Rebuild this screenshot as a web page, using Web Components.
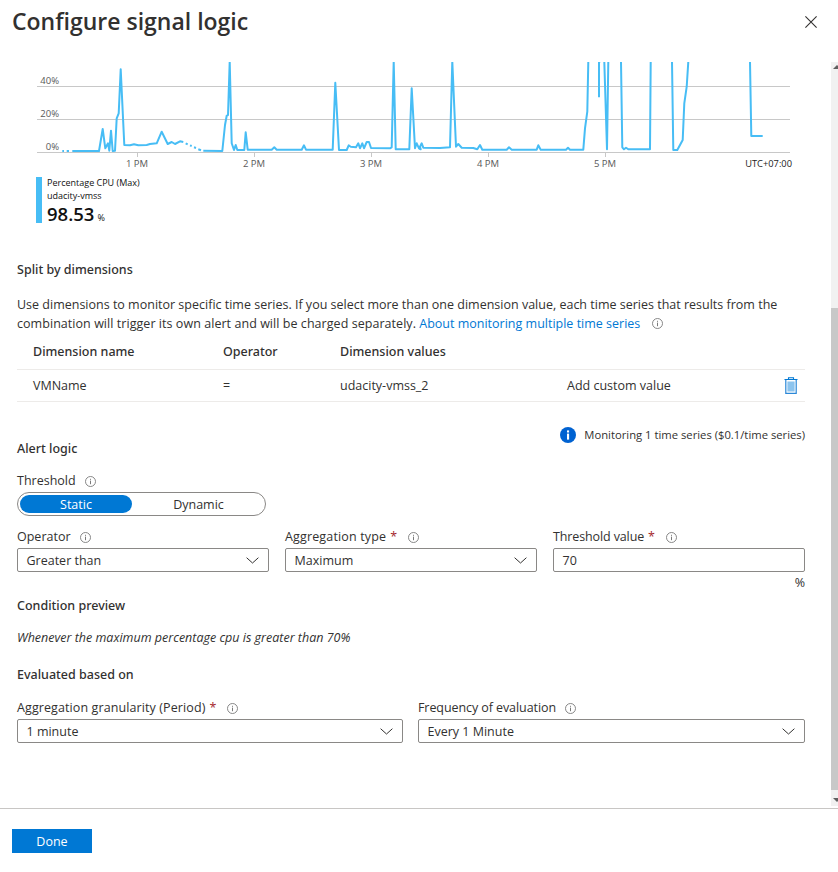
<!DOCTYPE html>
<html><head><meta charset="utf-8"><title>Configure signal logic</title>
<style>
html,body{margin:0;padding:0;height:100%;background:#fff}
body{font:12.5px/18px "Open Sans","Noto Sans",sans-serif;color:#323130;overflow:hidden}
</style></head><body>
<sig-panel>
  <span slot="title">Configure signal logic</span>
  <sig-chart></sig-chart>
  <sig-heading style="margin-top:38px">Split by dimensions</sig-heading>
  <sig-text style="margin-top:16px">Use dimensions to monitor specific time series. If you select more than one dimension value, each time series that results from the <span style="letter-spacing:.05px">combination will trigger its own alert and will be charged separately.</span> <sig-link>About monitoring multiple time series</sig-link><sig-info style="margin-left:12px"></sig-info></sig-text>
  <sig-dim-table></sig-dim-table>
  <sig-alert-head style="margin-top:24px"></sig-alert-head>
  <sig-label style="margin-top:15px">Threshold</sig-label>
  <sig-toggle style="margin-top:2px"></sig-toggle>
  <sig-row columns="252px 252px 252px" style="margin-top:11px">
    <sig-field label="Operator" value="Greater than"></sig-field>
    <sig-field required label="Aggregation type" value="Maximum" track=".15px"></sig-field>
    <sig-field required label="Threshold value" value="70" plain track="-.12px"></sig-field>
  </sig-row>
  <sig-text style="margin-top:4px;text-align:right;height:13px;line-height:14px">%</sig-text>
  <sig-heading style="margin-top:7px;padding-top:1px">Condition preview</sig-heading>
  <sig-text style="margin-top:14px;font-style:italic">Whenever the maximum percentage cpu is greater than 70%</sig-text>
  <sig-heading style="margin-top:18px;padding-top:1px">Evaluated based on</sig-heading>
  <sig-row columns="386px 387px" style="margin-top:15px;gap:15px">
    <sig-field required label="Aggregation granularity (Period)" value="1 minute" track=".1px"></sig-field>
    <sig-field label="Frequency of evaluation" value="Every 1 Minute" track="-.08px"></sig-field>
  </sig-row>
  <sig-button slot="footer">Done</sig-button>
</sig-panel>
<script>
const def=(name,html,init)=>customElements.define(name,class extends HTMLElement{
  constructor(){super();this.attachShadow({mode:'open'}).innerHTML=html;}
  connectedCallback(){init&&init.call(this,this.shadowRoot);}
});
const MED='font-family:"Noto Sans","Open Sans",sans-serif;font-weight:500;';
const infoSvg=`<svg width="11" height="11" viewBox="0 0 11 11" style="display:block"><circle cx="5.5" cy="5.5" r="5" fill="none" stroke="#7a7a7a" stroke-width=".9"/><rect x="5" y="4.6" width="1" height="3.6" fill="#7a7a7a"/><rect x="5" y="2.8" width="1" height="1" fill="#7a7a7a"/></svg>`;
def('sig-info',`<style>:host{display:inline-block;vertical-align:-1px;width:11px;height:11px}</style>${infoSvg}`);
def('sig-panel',`<style>
:host{display:flex;flex-direction:column;height:872px;width:838px;position:relative;overflow:hidden}
header{height:62px;flex:none;display:flex;align-items:flex-start;justify-content:space-between;padding:0 21px 0 12px;box-sizing:border-box}
h1{margin:4px 0 0;font-size:23px;line-height:34px;font-weight:600;color:#323130}
.x{margin-top:16px;width:12px;height:12px;display:block}
main{flex:1;min-height:0;overflow:hidden;padding:0 33px 0 17px;display:flex;flex-direction:column;position:relative}
footer{flex:none;height:64px;border-top:1px solid #c8c6c4;padding:20px 12px 0;box-sizing:border-box}
.sb{position:absolute;right:0;top:62px;height:744px;width:7px;background:#f1f1f1}
.sb i{position:absolute;left:0;right:0;top:246px;bottom:16px;background:#c8c8c8}
.sb b{position:absolute;left:2px;width:0;height:0;border:4px solid transparent}
.sb .u{top:3px;border-bottom:4px solid #606060;border-top:0}
.sb .d{bottom:4px;border-top:4px solid #606060;border-bottom:0}
</style>
<header><h1><slot name="title"></slot></h1>
<svg class="x" viewBox="0 0 12 12"><path d="M.4.4l11.2 11.2M11.6.4L.4 11.6" stroke="#323130" stroke-width="1.1" fill="none"/></svg></header>
<main><slot></slot></main>
<footer><slot name="footer"></slot></footer>
<div class="sb"><b class="u"></b><i></i><b class="d"></b></div>`);
def('sig-heading',`<style>:host{display:block;box-sizing:border-box;${MED}font-size:12.5px;height:18px;color:#323130}</style><slot></slot>`);
def('sig-text',`<style>:host{display:block;line-height:19px}</style><slot></slot>`);
def('sig-link',`<style>:host{color:#0078d4}</style><slot></slot>`);
def('sig-button',`<style>:host{display:block;width:80px;height:24px;background:#0078d4;color:#fff;text-align:center;line-height:25px}</style><slot></slot>`);
def('sig-label',`<style>:host{display:flex;align-items:center;height:18px;gap:9px}</style><slot></slot>${infoSvg}`);
def('sig-row',`<style>:host{display:grid;gap:16px}</style><slot></slot>`,function(){this.style.gridTemplateColumns=this.getAttribute('columns')});
def('sig-field',`<style>:host{display:block}
.l{display:flex;align-items:center;height:18px;box-sizing:border-box;padding-top:2px}.s{color:#a4262c;margin-left:4px;display:none}
svg.i{margin-left:9px}
.b{margin-top:3px;height:24px;box-sizing:border-box;border:1px solid #8a8886;border-radius:2px;display:flex;align-items:center;justify-content:space-between;padding:1px 9px 0 8.5px}
</style><div class="l"><span class="t"></span><span class="s">*</span><svg class="i" width="11" height="11" viewBox="0 0 11 11"><circle cx="5.5" cy="5.5" r="5" fill="none" stroke="#7a7a7a" stroke-width=".9"/><rect x="5" y="4.6" width="1" height="3.6" fill="#7a7a7a"/><rect x="5" y="2.8" width="1" height="1" fill="#7a7a7a"/></svg></div>
<div class="b"><span class="v"></span><svg class="c" width="13" height="7" viewBox="0 0 13 7"><path d="M.6.7L6.5 6 12.4.7" fill="none" stroke="#323130" stroke-width="1"/></svg></div>`,function(r){
 const t=r.querySelector('.t');t.textContent=this.getAttribute('label');r.querySelector('.v').textContent=this.getAttribute('value');
 if(this.hasAttribute('track'))t.style.letterSpacing=this.getAttribute('track');
 if(this.hasAttribute('required')){r.querySelector('.s').style.display='inline';r.querySelector('.i').style.marginLeft='11px'}
 if(this.hasAttribute('plain'))r.querySelector('.c').style.display='none';
});
def('sig-toggle',`<style>:host{display:flex;width:249px;height:24px;box-sizing:border-box;border:1px solid #8a8886;border-radius:12px;padding:2px;text-align:center;line-height:19px}
.a{width:112px;background:#0078d4;color:#fff;border-radius:9px}.b{flex:1;padding-left:2px}</style><div class="a">Static</div><div class="b">Dynamic</div>`);
def('sig-dim-table',`<style>:host{display:block}
.r{display:grid;grid-template-columns:190px 117px 227px 1fr auto;padding-left:16px;align-items:center}
.h{height:36px;box-sizing:border-box;padding-top:1px;${MED}color:#323130}
.d{height:33px;box-sizing:border-box;border-top:1px solid #edebe9;border-bottom:1px solid #edebe9;padding-right:7px}
</style><div class="r h"><span>Dimension name</span><span>Operator</span><span>Dimension values</span></div>
<div class="r d"><span>VMName</span><span>=</span><span>udacity-vmss_2</span><span>Add custom value</span>
<svg width="14" height="17" viewBox="0 0 14 17"><path d="M4.5 2V.7h5V2M.5 2.5h13" fill="none" stroke="#0078d4" stroke-width="1.1"/><path d="M1.8 2.8v13.5h10.4V2.8" fill="none" stroke="#2b88d8" stroke-width="1.2"/><rect x="3.4" y="4.5" width="7.2" height="10" fill="#8cc4ee"/></svg></div>`);
def('sig-alert-head',`<style>:host{display:flex;justify-content:space-between;height:31px}
.h{align-self:flex-end;margin-bottom:-1px;${MED}}.m{display:flex;align-items:center;height:18px;gap:8px;font-size:11.25px}</style>
<div class="h">Alert logic</div><div class="m"><svg width="16" height="16" viewBox="0 0 16 16"><circle cx="8" cy="8" r="8" fill="#0062d1"/><rect x="7" y="6.6" width="2.1" height="6" fill="#fff"/><rect x="7" y="3.4" width="2.1" height="2.1" fill="#fff"/></svg><span>Monitoring 1 time series ($0.1/time series)</span></div>`);
const Z1=p=>p.map(([x,y])=>[x/3,60+y/3]), Z2=p=>p.map(([x,y])=>[420+x/3,40+y/3]);
const series=[
 Z1([[187,273],[192,273]]),Z1([[200,273],[207,273]]),
 Z1([[217,273],[297,273],[308,207],[316,265],[324,250],[328,272],[333,212],[338,273],[345,272],[350,175],[356,160],[362,28],[373,255],[390,256],[402,253],[415,256],[440,255],[450,252],[470,250],[485,215],[503,252],[515,246],[525,252],[540,244],[550,246]]),
 Z1([[557,250],[563,253]]),Z1([[570,256],[575,258]]),Z1([[582,262],[588,264]]),Z1([[595,268],[603,271]]),
 Z1([[610,272],[667,273],[675,195],[680,167],[684,165],[689,5],[695,250],[702,270],[707,255],[712,270],[733,270],[737,217],[743,269],[815,269],[823,262],[830,269],[905,269],[912,256],[918,269],[998,269],[1006,68],[1017,270],[1040,270],[1046,256],[1052,260],[1068,262],[1075,250],[1080,265],[1087,250],[1092,265],[1100,246],[1107,246],[1113,264],[1170,265],[1175,262],[1181,5],[1187,268],[1228,268],[1235,85],[1245,265],[1250,250],[1257,265],[1262,268]]).concat(
 Z2([[0,320],[5,310],[10,323],[60,324],[90,322],[97,65],[108,320],[115,312],[125,323],[160,324],[172,328],[180,315],[187,329],[260,329],[267,322],[275,329],[350,329],[355,316],[362,329],[438,329],[444,323],[450,329],[490,329],[495,265],[502,215],[505,65]])),
 Z2([[537,65],[537,172]]),Z2([[540,65],[541,65]]),
 Z2([[553,65],[561,328],[565,65]]),
 Z2([[603,65],[607,322],[612,328],[618,323],[625,328],[690,328],[692,65]]),
 Z2([[756,65],[760,330],[772,330],[788,300],[793,190],[800,140],[805,65]]),
 Z2([[990,65],[994,288],[1028,288]])
];
const ptxt=series.map(s=>`<polyline points="${s.map(([x,y])=>x.toFixed(1)+','+y.toFixed(1)).join(' ')}"/>`).join('');
const grid=[86.5,119.5,152.5].map(y=>`<line x1="37" x2="790" y1="${y}" y2="${y}"/>`).join('');
const ticks=[[137,'1 PM'],[254,'2 PM'],[371,'3 PM'],[488,'4 PM'],[605,'5 PM']];
def('sig-chart',`<style>:host{display:block;margin-left:-17px;width:830px}svg{display:block}
text{font-family:"Open Sans","Noto Sans",sans-serif;font-size:9.5px;fill:#595959}
.lg{margin:7px 0 0 36px;display:flex;height:46px;gap:5px}.bar{width:6px;background:#47bdf5}
.n{font-size:9px;line-height:12.5px;color:#111}.v{font-size:18.5px;line-height:25px;margin-top:-1px;font-weight:600;color:#111}.v small{font-size:9px;font-weight:400;margin-left:3px}
</style>
<svg width="830" height="108" viewBox="0 62 830 108">
<g stroke="#c8c8c8" stroke-width="1">${grid}${ticks.map(t=>`<line x1="${t[0]+.5}" x2="${t[0]+.5}" y1="153" y2="157"/>`).join('')}</g>
<g fill="none" stroke="#47bdf5" stroke-width="2" stroke-linejoin="round">${ptxt}</g>
<text x="59" y="84" text-anchor="end">40%</text><text x="59" y="117" text-anchor="end">20%</text><text x="59" y="150" text-anchor="end">0%</text>
${ticks.map(t=>`<text x="${t[0]}" y="167" text-anchor="middle">${t[1]}</text>`).join('')}
<text x="792" y="167" text-anchor="end" style="fill:#222;font-size:9.3px">UTC+07:00</text>
</svg>
<div class="lg"><div class="bar"></div><div><div class="n">Percentage CPU (Max)</div><div class="n">udacity-vmss</div><div class="v">98.53<small>%</small></div></div></div>`);
</script>
</body></html>
